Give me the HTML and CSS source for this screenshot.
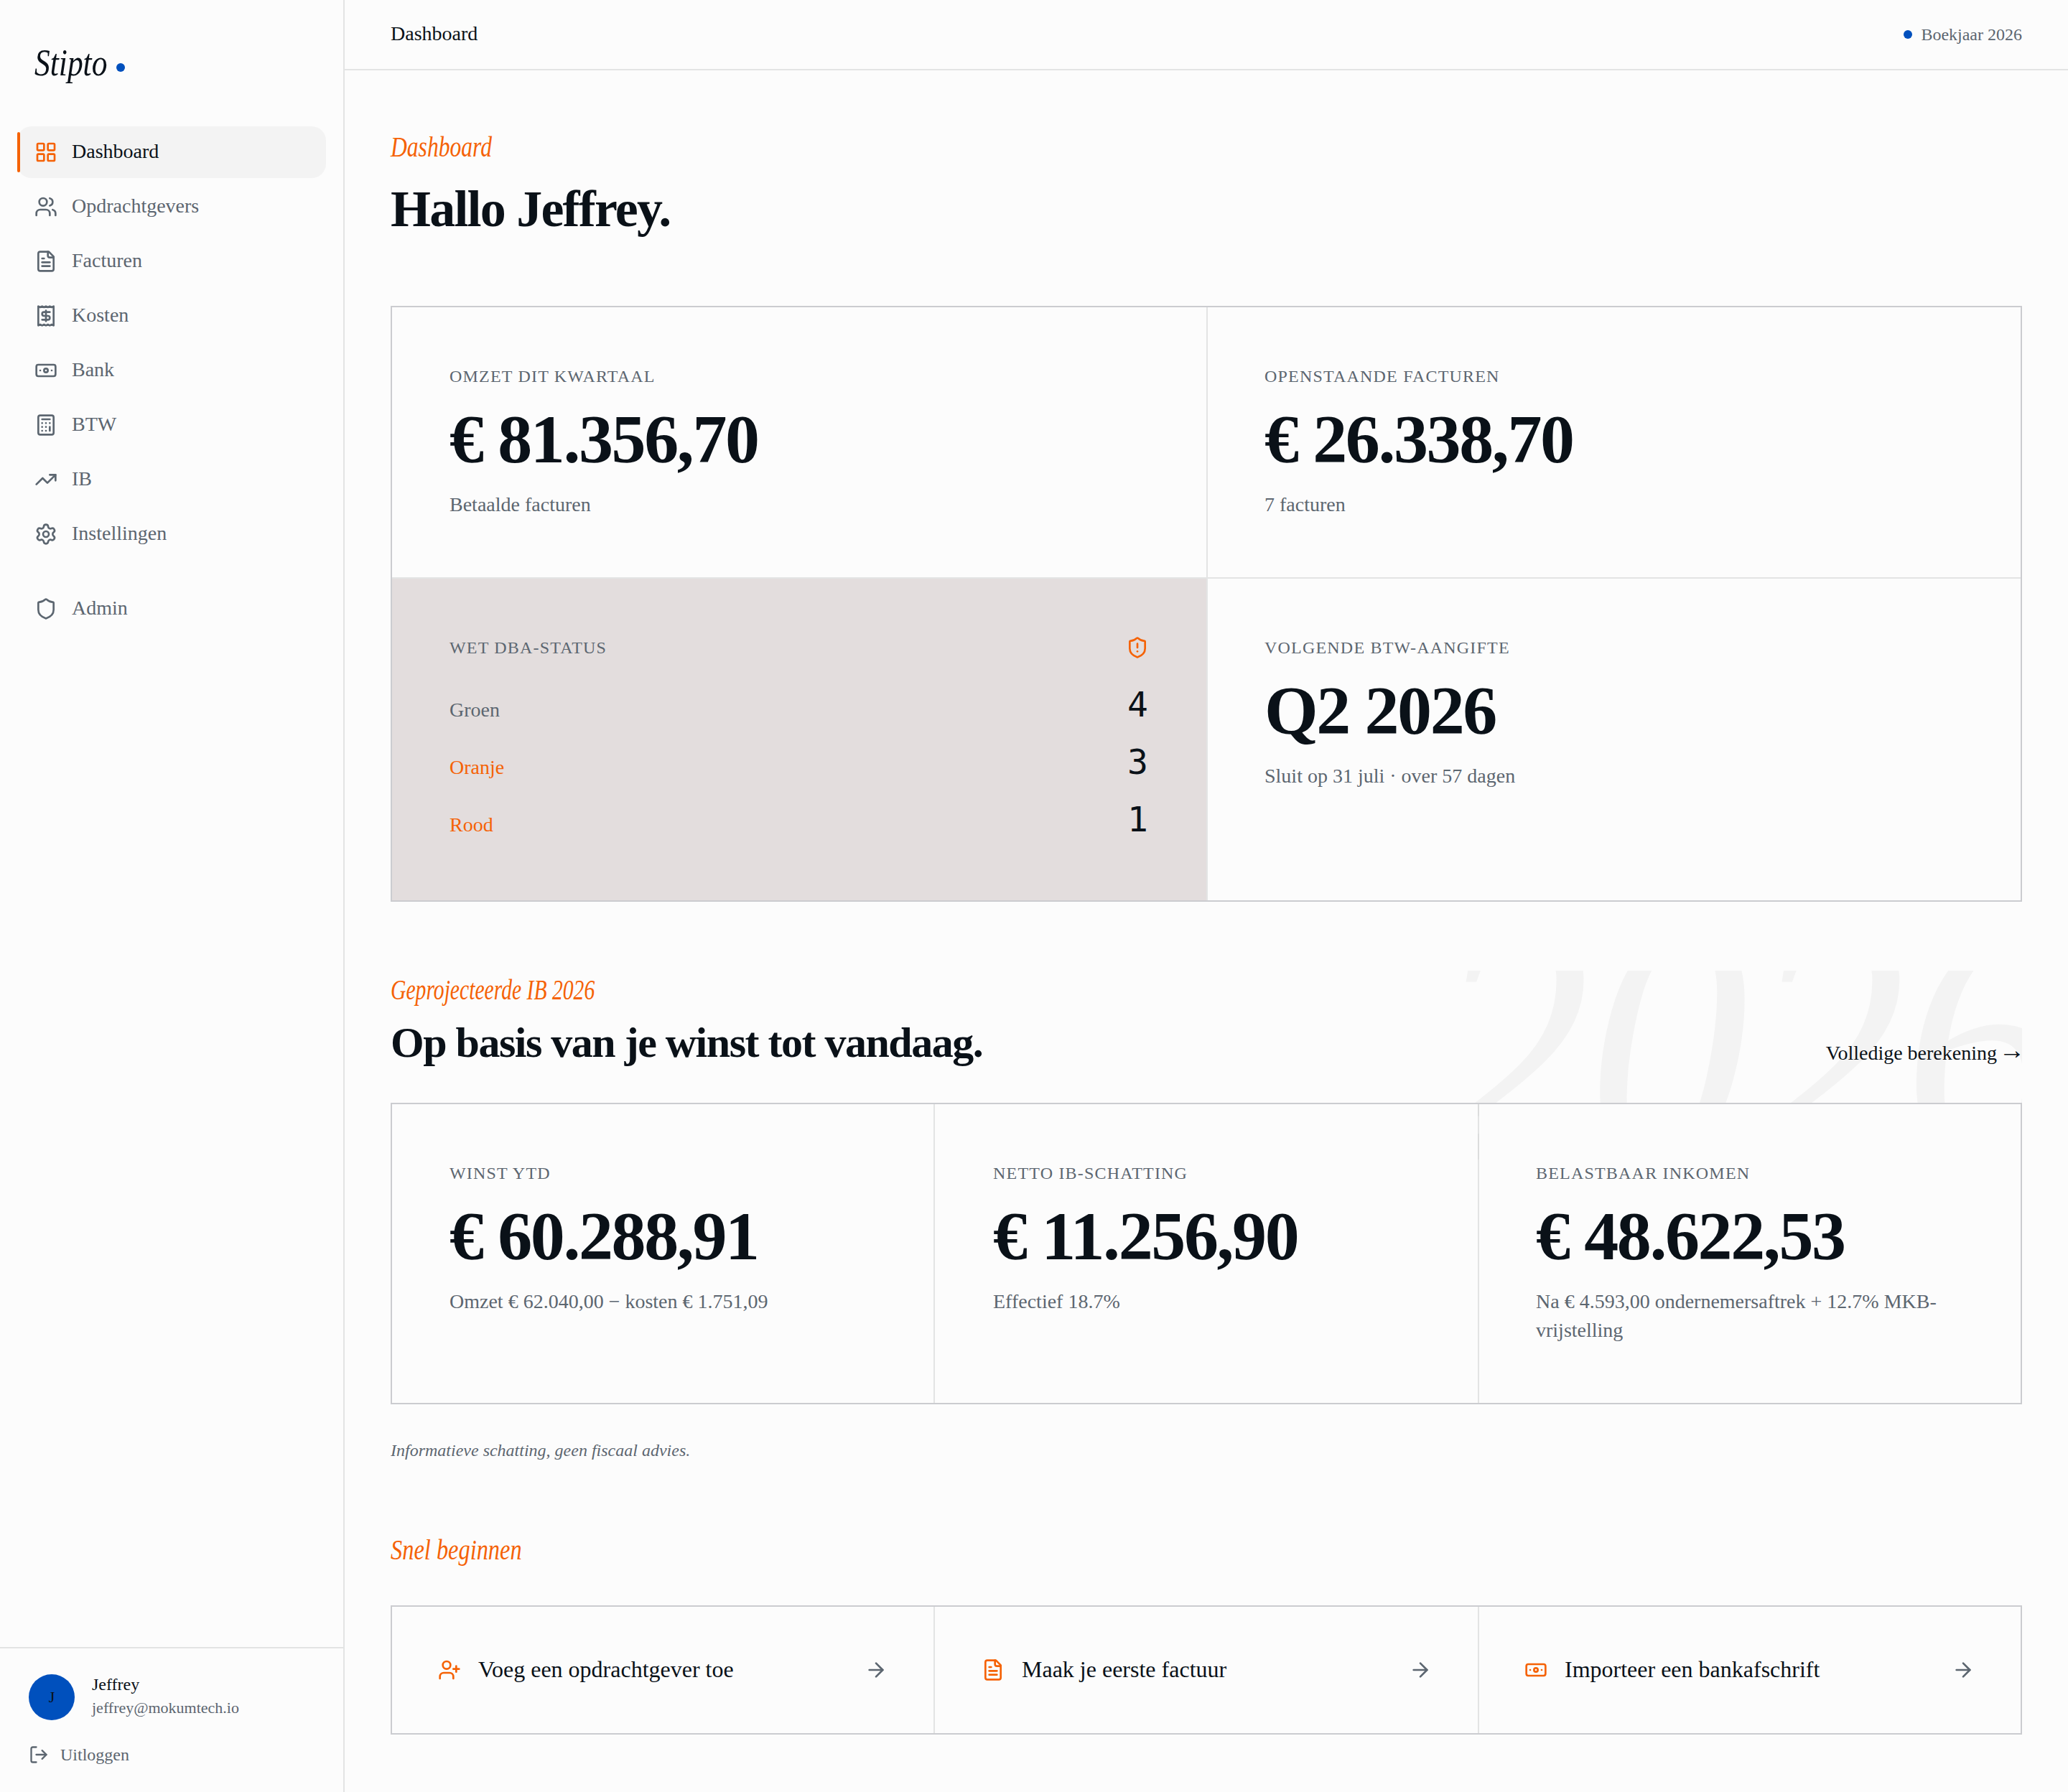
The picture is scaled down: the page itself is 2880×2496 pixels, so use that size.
FILE: index.html
```html
<!DOCTYPE html>
<html lang="nl">
<head>
<meta charset="utf-8">
<title>Stipto – Dashboard</title>
<link rel="stylesheet" href="styles.css">
</head>
<body>
<svg class="sprite" aria-hidden="true">
  <symbol id="grid" viewBox="0 0 24 24"><rect width="7" height="7" x="3" y="3" rx="1"/><rect width="7" height="7" x="14" y="3" rx="1"/><rect width="7" height="7" x="14" y="14" rx="1"/><rect width="7" height="7" x="3" y="14" rx="1"/></symbol>
  <symbol id="users" viewBox="0 0 24 24"><path d="M16 21v-2a4 4 0 0 0-4-4H6a4 4 0 0 0-4 4v2"/><circle cx="9" cy="7" r="4"/><path d="M22 21v-2a4 4 0 0 0-3-3.87"/><path d="M16 3.13a4 4 0 0 1 0 7.75"/></symbol>
  <symbol id="file" viewBox="0 0 24 24"><path d="M15 2H6a2 2 0 0 0-2 2v16a2 2 0 0 0 2 2h12a2 2 0 0 0 2-2V7Z"/><path d="M14 2v4a2 2 0 0 0 2 2h4"/><path d="M10 9H8"/><path d="M16 13H8"/><path d="M16 17H8"/></symbol>
  <symbol id="receipt" viewBox="0 0 24 24"><path d="M4 2v20l2-1 2 1 2-1 2 1 2-1 2 1 2-1 2 1V2l-2 1-2-1-2 1-2-1-2 1-2-1-2 1Z"/><path d="M16 8h-6a2 2 0 1 0 0 4h4a2 2 0 1 1 0 4H8"/><path d="M12 17.5v-11"/></symbol>
  <symbol id="banknote" viewBox="0 0 24 24"><rect width="20" height="12" x="2" y="6" rx="2"/><circle cx="12" cy="12" r="2"/><path d="M6 12h.01M18 12h.01"/></symbol>
  <symbol id="calculator" viewBox="0 0 24 24"><rect width="16" height="20" x="4" y="2" rx="2"/><path d="M8 6h8"/><path d="M16 14v4"/><path d="M16 10h.01M12 10h.01M8 10h.01M12 14h.01M8 14h.01M12 18h.01M8 18h.01"/></symbol>
  <symbol id="trend" viewBox="0 0 24 24"><path d="m22 7-8.5 8.5-5-5L2 17"/><path d="M16 7h6v6"/></symbol>
  <symbol id="settings" viewBox="0 0 24 24"><path d="M9.671 4.136a2.34 2.34 0 0 1 4.659 0 2.34 2.34 0 0 0 3.319 1.915 2.34 2.34 0 0 1 2.33 4.033 2.34 2.34 0 0 0 0 3.831 2.34 2.34 0 0 1-2.33 4.033 2.34 2.34 0 0 0-3.319 1.915 2.34 2.34 0 0 1-4.659 0 2.34 2.34 0 0 0-3.32-1.915 2.34 2.34 0 0 1-2.33-4.033 2.34 2.34 0 0 0 0-3.831A2.34 2.34 0 0 1 6.35 6.051a2.34 2.34 0 0 0 3.319-1.915"/><circle cx="12" cy="12" r="3"/></symbol>
  <symbol id="shield" viewBox="0 0 24 24"><path d="M20 13c0 5-3.5 7.5-7.66 8.95a1 1 0 0 1-.67-.01C7.5 20.5 4 18 4 13V6a1 1 0 0 1 1-1c2 0 4.5-1.2 6.24-2.72a1.17 1.17 0 0 1 1.52 0C14.51 3.81 17 5 19 5a1 1 0 0 1 1 1z"/></symbol>
  <symbol id="alert" viewBox="0 0 24 24"><path d="M20 13c0 5-3.5 7.5-7.66 8.95a1 1 0 0 1-.67-.01C7.5 20.5 4 18 4 13V6a1 1 0 0 1 1-1c2 0 4.5-1.2 6.24-2.72a1.17 1.17 0 0 1 1.52 0C14.51 3.81 17 5 19 5a1 1 0 0 1 1 1z"/><path d="M12 8v4"/><path d="M12 16h.01"/></symbol>
  <symbol id="user-plus" viewBox="0 0 24 24"><path d="M16 21v-2a4 4 0 0 0-4-4H6a4 4 0 0 0-4 4v2"/><circle cx="9" cy="7" r="4"/><path d="M19 8v6M22 11h-6"/></symbol>
  <symbol id="arrow" viewBox="0 0 24 24"><path d="M5 12h14"/><path d="m12 5 7 7-7 7"/></symbol>
  <symbol id="logout" viewBox="0 0 24 24"><path d="M9 21H5a2 2 0 0 1-2-2V5a2 2 0 0 1 2-2h4"/><path d="m16 17 5-5-5-5"/><path d="M21 12H9"/></symbol>
</svg>

<div class="app">
  <aside class="sidebar">
    <div class="brand"><span class="brand-name">Stipto</span><span class="dot"></span></div>
    <nav class="nav">
      <a class="nav-item active"><svg class="icon"><use href="#grid"/></svg><span class="nav-text">Dashboard</span></a>
      <a class="nav-item"><svg class="icon"><use href="#users"/></svg><span class="nav-text">Opdrachtgevers</span></a>
      <a class="nav-item"><svg class="icon"><use href="#file"/></svg><span class="nav-text">Facturen</span></a>
      <a class="nav-item"><svg class="icon"><use href="#receipt"/></svg><span class="nav-text">Kosten</span></a>
      <a class="nav-item"><svg class="icon"><use href="#banknote"/></svg><span class="nav-text">Bank</span></a>
      <a class="nav-item"><svg class="icon"><use href="#calculator"/></svg><span class="nav-text">BTW</span></a>
      <a class="nav-item"><svg class="icon"><use href="#trend"/></svg><span class="nav-text">IB</span></a>
      <a class="nav-item"><svg class="icon"><use href="#settings"/></svg><span class="nav-text">Instellingen</span></a>
      <a class="nav-item admin"><svg class="icon"><use href="#shield"/></svg><span class="nav-text">Admin</span></a>
    </nav>
    <div class="account">
      <div class="user">
        <div class="avatar">J</div>
        <div>
          <div class="user-name">Jeffrey</div>
          <div class="user-mail">jeffrey@mokumtech.io</div>
        </div>
      </div>
      <a class="logout"><svg class="icon small"><use href="#logout"/></svg>Uitloggen</a>
    </div>
  </aside>

  <div class="page">
    <header class="topbar">
      <span class="nav-text">Dashboard</span>
      <span class="year"><span class="dot"></span>Boekjaar 2026</span>
    </header>

    <main class="main">
      <div class="eyebrow"><span class="narrow narrow-dashboard">Dashboard</span></div>
      <h1>Hallo Jeffrey.</h1>

      <section class="cells two">
        <div class="cell">
          <div class="label">OMZET DIT KWARTAAL</div>
          <div class="value">€ 81.356,70</div>
          <div class="sub">Betaalde facturen</div>
        </div>
        <div class="cell">
          <div class="label">OPENSTAANDE FACTUREN</div>
          <div class="value">€ 26.338,70</div>
          <div class="sub">7 facturen</div>
        </div>
        <div class="cell tinted">
          <div class="label-row"><div class="label">WET DBA-STATUS</div><svg class="icon orange"><use href="#alert"/></svg></div>
          <div class="statuses">
            <div class="status"><span>Groen</span><span class="count">4</span></div>
            <div class="status warn"><span>Oranje</span><span class="count">3</span></div>
            <div class="status warn"><span>Rood</span><span class="count">1</span></div>
          </div>
        </div>
        <div class="cell">
          <div class="label">VOLGENDE BTW-AANGIFTE</div>
          <div class="value">Q2 2026</div>
          <div class="sub">Sluit op 31 juli · over 57 dagen</div>
        </div>
      </section>

      <section class="projection">
        <div class="watermark" aria-hidden="true">2026</div>
        <div class="section-head">
          <div>
            <div class="eyebrow"><span class="narrow narrow-projection">Geprojecteerde IB 2026</span></div>
            <h2>Op basis van je winst tot vandaag.</h2>
          </div>
          <a class="more">Volledige berekening <span class="more-arrow">→</span></a>
        </div>
        <div class="cells three">
          <div class="cell">
            <div class="label">WINST YTD</div>
            <div class="value">€ 60.288,91</div>
            <div class="sub">Omzet € 62.040,00 − kosten € 1.751,09</div>
          </div>
          <div class="cell">
            <div class="label">NETTO IB-SCHATTING</div>
            <div class="value">€ 11.256,90</div>
            <div class="sub">Effectief 18.7%</div>
          </div>
          <div class="cell">
            <div class="label">BELASTBAAR INKOMEN</div>
            <div class="value">€ 48.622,53</div>
            <div class="sub">Na € 4.593,00 ondernemersaftrek + 12.7% MKB-vrijstelling</div>
          </div>
        </div>
        <p class="note">Informatieve schatting, geen fiscaal advies.</p>
      </section>

      <section class="quick">
        <div class="eyebrow"><span class="narrow narrow-quick">Snel beginnen</span></div>
        <div class="cells three">
          <a class="action"><svg class="icon orange"><use href="#user-plus"/></svg><span class="action-text">Voeg een opdrachtgever toe</span><svg class="icon"><use href="#arrow"/></svg></a>
          <a class="action"><svg class="icon orange"><use href="#file"/></svg><span class="action-text">Maak je eerste factuur</span><svg class="icon"><use href="#arrow"/></svg></a>
          <a class="action"><svg class="icon orange"><use href="#banknote"/></svg><span class="action-text">Importeer een bankafschrift</span><svg class="icon"><use href="#arrow"/></svg></a>
        </div>
      </section>
    </main>
  </div>
</div>
</body>
</html>
```
FILE: styles.css
```css
:root {
  --bg: #fcfcfc;
  --ink: #0a1118;
  --muted: #5c6670;
  --orange: #f56205;
  --blue: #0050bd;
  --line: rgba(10, 17, 24, 0.1);
  --line-strong: #cbccd0;
}

* { box-sizing: border-box; }

body {
  margin: 0;
  background: var(--bg);
  color: var(--ink);
  font-family: "Liberation Serif", "Times New Roman", serif;
  font-size: 28px;
  line-height: 40px;
}

h1, h2, p { margin: 0; }

.sprite { display: none; }

.app { display: flex; height: 2496px; }

.icon {
  width: 32px;
  height: 32px;
  flex: none;
  fill: none;
  stroke: currentColor;
  stroke-width: 2;
  stroke-linecap: round;
  stroke-linejoin: round;
  color: var(--muted);
}
.icon.small { width: 28px; height: 28px; }
.icon.orange { color: var(--orange); }

.dot {
  width: 12px;
  height: 12px;
  flex: none;
  border-radius: 50%;
  background: var(--blue);
}

/* Sidebar */
.sidebar {
  width: 480px;
  flex: none;
  display: flex;
  flex-direction: column;
  border-right: 2px solid var(--line);
}
.brand {
  height: 176px;
  padding: 56px 48px 0;
  display: flex;
  align-items: flex-start;
}
.brand-name {
  width: 114px;
  font-size: 53px;
  line-height: 62px;
  font-style: italic;
  transform: scaleX(0.82);
  transform-origin: left;
}
.brand .dot { margin-top: 32px; }

.nav {
  flex: 1;
  padding: 0 24px;
  display: flex;
  flex-direction: column;
  gap: 4px;
}
.nav-item {
  position: relative;
  height: 72px;
  padding: 0 24px;
  display: flex;
  align-items: center;
  gap: 20px;
  color: var(--muted);
}
.nav-text { height: 40px; line-height: 38px; }
.nav-item.active {
  background: #f3f3f3;
  border-radius: 20px;
  color: var(--ink);
}
.nav-item.active .icon { color: var(--orange); }
.nav-item.active::before {
  content: "";
  position: absolute;
  left: 0;
  top: 8px;
  width: 4px;
  height: 56px;
  border-radius: 2px;
  background: var(--orange);
}
.nav-item.admin { margin-top: 28px; }

.account {
  padding: 36px 40px;
  border-top: 2px solid var(--line);
}
.user { display: flex; gap: 24px; height: 64px; }
.avatar {
  width: 64px;
  height: 64px;
  border-radius: 50%;
  background: var(--blue);
  font-size: 22px;
  line-height: 64px;
  text-align: center;
}
.user-name { font-size: 24px; line-height: 29px; }
.user-mail { font-size: 22px; line-height: 36px; color: var(--muted); }
.logout {
  margin-top: 32px;
  display: flex;
  align-items: center;
  gap: 16px;
  font-size: 24px;
  line-height: 32px;
  color: var(--muted);
}

/* Top bar */
.page { flex: 1; min-width: 0; }
.topbar {
  height: 98px;
  padding: 0 64px;
  display: flex;
  align-items: center;
  justify-content: space-between;
  border-bottom: 2px solid var(--line);
}
.year {
  display: flex;
  align-items: center;
  gap: 12px;
  font-size: 24px;
  line-height: 32px;
  color: var(--muted);
}

/* Content */
.main { padding: 80px 64px; }

.eyebrow {
  height: 53px;
  font-size: 40px;
  line-height: 54px;
  font-style: italic;
  color: var(--orange);
}
.narrow { display: inline-block; transform-origin: left; white-space: nowrap; }
.narrow-dashboard { transform: scaleX(0.79); }
.narrow-projection { transform: scaleX(0.741); }
.narrow-quick { transform: scaleX(0.81); }

h1 {
  margin: 20px 0 95px;
  font-size: 72px;
  line-height: 80px;
  letter-spacing: -0.025em;
}

.cells {
  display: grid;
  gap: 2px;
  border: 2px solid var(--line-strong);
  background: var(--line);
  background-clip: padding-box;
}
.two { grid-template-columns: 1134px 1fr; }
.three { grid-template-columns: 754px 1fr 754px; }

.cell { padding: 80px; background: var(--bg); }
.two .cell:nth-child(even) { padding-left: 79px; }
.three .cell:nth-child(2) { padding-left: 81px; }
.three .cell:nth-child(3) { padding-left: 79px; }
.tinted { background: #e3dddd; }

.label {
  font-size: 24px;
  line-height: 32px;
  letter-spacing: 0.05em;
  color: var(--muted);
}
.label-row { display: flex; justify-content: space-between; }
.value {
  margin: 24px 0;
  font-size: 96px;
  line-height: 96px;
  font-weight: 700;
  letter-spacing: -0.025em;
}
.sub {
  margin: -1px 0 1px;
  color: var(--muted);
}

.statuses {
  margin-top: 31px;
  display: flex;
  flex-direction: column;
  gap: 16px;
  padding-bottom: 1px;
}
.status {
  height: 64px;
  display: flex;
  align-items: baseline;
  justify-content: space-between;
  color: var(--muted);
}
.status.warn { color: var(--orange); }
.count {
  margin-right: 1px;
  font-family: "DejaVu Sans Mono", Menlo, monospace;
  font-size: 48px;
  line-height: 64px;
  color: var(--ink);
}

/* Projection */
.projection {
  position: relative;
  margin-top: 96px;
  overflow: hidden;
}
.watermark {
  position: absolute;
  top: -164px;
  left: 1447px;
  font-size: 480px;
  line-height: 531px;
  font-style: italic;
  letter-spacing: -0.01em;
  white-space: nowrap;
  transform: scaleX(0.935);
  transform-origin: left;
  color: #f3f3f3;
}
.section-head {
  position: relative;
  margin-bottom: 48px;
  display: flex;
  align-items: flex-end;
  justify-content: space-between;
}
h2 {
  margin-top: 11px;
  font-size: 60px;
  line-height: 72px;
  letter-spacing: -0.025em;
}
.more { padding-bottom: 1px; }
.more-arrow { display: inline-block; transform: translateY(-4px) scale(1.3); }
.projection .cells { position: relative; }
.note {
  margin-top: 48px;
  font-size: 24px;
  line-height: 32px;
  font-style: italic;
  color: var(--muted);
}

/* Quick start */
.quick { margin-top: 96px; }
.quick .cells { margin-top: 51px; }
.action {
  padding: 64px;
  display: flex;
  align-items: center;
  gap: 24px;
  background: var(--bg);
  font-size: 32px;
}
.action:nth-child(2) { padding-left: 65px; }
.action:nth-child(3) { padding-left: 63px; }
.action-text { flex: 1; height: 48px; line-height: 46px; }
```
